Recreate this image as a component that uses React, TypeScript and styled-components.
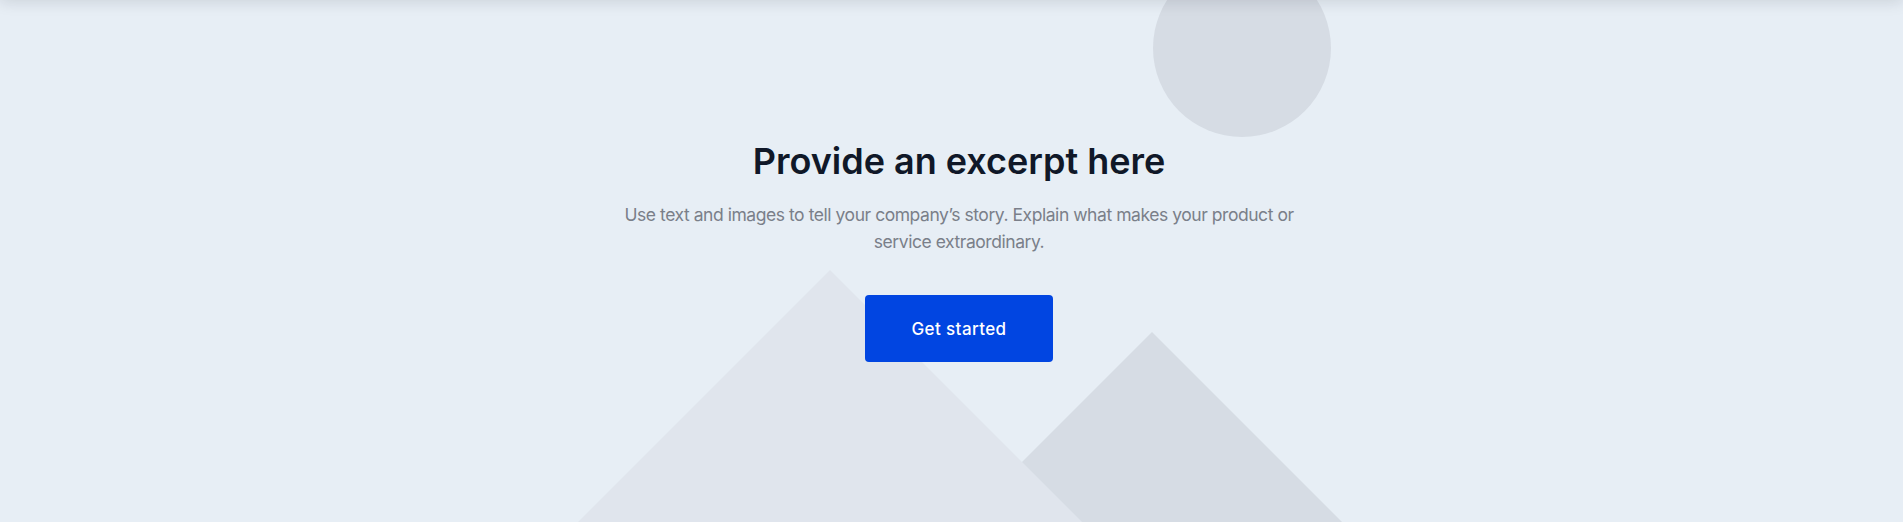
import React from "react";
import styled, { createGlobalStyle } from "styled-components";

const GlobalStyle = createGlobalStyle`
  html, body {
    margin: 0;
    padding: 0;
    background: #e7eef5;
  }
  body {
    font-family: Inter, "Noto Sans", "Liberation Sans", sans-serif;
    -webkit-font-smoothing: antialiased;
  }
`;

export default function App() {
  return (
    <>
      <GlobalStyle />
      <Hero>
        <HeaderShade />
        <Backdrop
          viewBox="0 0 1903 522"
          preserveAspectRatio="xMidYMin slice"
          aria-hidden="true"
        >
          <circle cx="1242" cy="48" r="89" fill="#d6dce4" />
          <polygon points="1152,332 962,522 1342,522" fill="#d6dce4" />
          <polygon points="830,270 578,522 1082,522" fill="#e0e5ed" />
        </Backdrop>
        <Content>
          <Title>Provide an excerpt here</Title>
          <Excerpt>
            Use text and images to tell your company’s story. Explain what
            makes your product or service extraordinary.
          </Excerpt>
          <CallToAction type="button">Get started</CallToAction>
        </Content>
      </Hero>
    </>
  );
}

const Hero = styled.section`
  position: relative;
  overflow: hidden;
  height: 522px;
  background: #e7eef5;
`;

const HeaderShade = styled.div`
  position: absolute;
  left: 0;
  right: 0;
  top: -60px;
  height: 60px;
  z-index: 2;
  box-shadow: 0 2px 14px rgba(15, 23, 42, 0.13);
`;

const Backdrop = styled.svg`
  position: absolute;
  inset: 0;
  width: 100%;
  height: 100%;
  z-index: 0;
`;

const Content = styled.div`
  position: relative;
  z-index: 1;
  display: flex;
  flex-direction: column;
  align-items: center;
  padding: 141px 0 0 15px;
  text-align: center;
`;

const Title = styled.h1`
  margin: 0;
  font-size: 36px;
  line-height: 41px;
  font-weight: 600;
  letter-spacing: 0;
  color: #101828;
`;

const Excerpt = styled.p`
  margin: 19px 0 0;
  max-width: 690px;
  font-size: 17.5px;
  line-height: 27px;
  font-weight: 400;
  letter-spacing: -0.45px;
  color: #7a7f89;
`;

const CallToAction = styled.button`
  margin-top: 40px;
  width: 188px;
  height: 67px;
  border: none;
  border-radius: 4px;
  background: #0145e1;
  color: #ffffff;
  font-family: inherit;
  font-size: 17px;
  font-weight: 500;
  letter-spacing: 0.4px;
  cursor: pointer;
`;
